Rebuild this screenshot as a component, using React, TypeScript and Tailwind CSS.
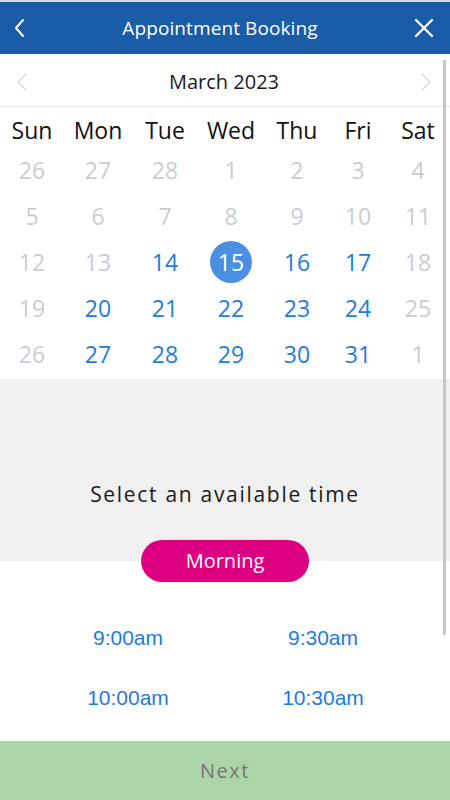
import React from "react";

/* ── Calendar data ───────────────────────────────── */
const WEEKDAYS = ["Sun", "Mon", "Tue", "Wed", "Thu", "Fri", "Sat"];

type Day = { n: number; on: boolean };

const d = (n: number, on = false): Day => ({ n, on });

const WEEKS: Day[][] = [
  [d(26), d(27), d(28), d(1), d(2), d(3), d(4)],
  [d(5), d(6), d(7), d(8), d(9), d(10), d(11)],
  [d(12), d(13), d(14, true), d(15, true), d(16, true), d(17, true), d(18)],
  [d(19), d(20, true), d(21, true), d(22, true), d(23, true), d(24, true), d(25)],
  [d(26), d(27, true), d(28, true), d(29, true), d(30, true), d(31, true), d(1)],
];

const SELECTED = 15;

const TIMES = ["9:00am", "9:30am", "10:00am", "10:30am"];

const COLS = "grid grid-cols-[64px_68px_66px_66px_66px_56px_64px]";

export default function App() {
  return (
    <div
      className="relative h-[800px] w-[450px] flex flex-col bg-white overflow-hidden"
      style={{ fontFamily: '"Open Sans", "Noto Sans", sans-serif' }}
    >
      {/* Header */}
      <div className="h-[2px] bg-[#d6d6d6]" />
      <header className="h-[52px] bg-[#1b5ca8] flex items-center justify-between px-[12px] text-white">
        <svg width="14" height="22" viewBox="0 0 14 22" fill="none">
          <path d="M11 3 L4 11 L11 19" stroke="white" strokeWidth="2" strokeLinecap="round" strokeLinejoin="round" />
        </svg>
        <h1 className="text-[19px] leading-none tracking-[0.1px]">Appointment Booking</h1>
        <svg width="20" height="20" viewBox="0 0 20 20" fill="none" className="mr-[4px]">
          <path d="M2 2 L18 18 M18 2 L2 18" stroke="white" strokeWidth="2.4" strokeLinecap="round" />
        </svg>
      </header>

      {/* Month selector */}
      <div className="h-[53px] pt-[4px] flex items-center justify-between px-[16px] border-b border-[#e6eaf0]">
        <svg width="12" height="20" viewBox="0 0 12 20" fill="none">
          <path d="M10 2 L2 10 L10 18" stroke="#d5d8dc" strokeWidth="1.3" />
        </svg>
        <span className="text-[20px] text-[#1a1a1a] leading-none">March 2023</span>
        <svg width="12" height="20" viewBox="0 0 12 20" fill="none" className="mr-[2px]">
          <path d="M2 2 L10 10 L2 18" stroke="#d5d8dc" strokeWidth="1.3" />
        </svg>
      </div>

      {/* Weekdays */}
      <div className={`${COLS} h-[40px] items-end`}>
        {WEEKDAYS.map((w) => (
          <span key={w} className="text-center text-[23px] leading-[34px] text-[#111]">
            {w}
          </span>
        ))}
      </div>

      {/* Dates */}
      <div className="pb-[2px]">
        {WEEKS.map((week, i) => (
          <div key={i} className={`${COLS} h-[46px] items-center`}>
            {week.map((day, j) => {
              const sel = day.on && day.n === SELECTED;
              return (
                <div key={j} className="flex justify-center">
                  {sel ? (
                    <span className="w-[42px] h-[42px] rounded-full bg-[#4a8fe2] text-white text-[23px] flex items-center justify-center">
                      {day.n}
                    </span>
                  ) : (
                    <span
                      className={`text-[23px] leading-[42px] ${day.on ? "text-[#1f7be0]" : "text-[#c9cdd2]"}`}
                    >
                      {day.n}
                    </span>
                  )}
                </div>
              );
            })}
          </div>
        ))}
      </div>

      {/* Time selection heading */}
      <div className="bg-[#f0f0f0] pt-[101px] flex flex-col items-center">
        <p className="text-[21px] leading-[28px] tracking-[1.7px] text-[#1a1a1a]">
          Select an available time
        </p>
        <button
          type="button"
          className="relative z-10 mt-[32px] -mb-[21px] w-[168px] h-[42px] rounded-full bg-[#dc0080] text-white text-[20px]"
        >
          Morning
        </button>
      </div>

      {/* Time slots */}
      <div className="flex-1 pt-[47px] grid grid-cols-[256px_134px] content-start">
        {TIMES.map((t) => (
          <button
            key={t}
            type="button"
            className="h-[60px] text-[21px] text-[#1f7be0] text-center"
            style={{ fontFamily: '"Liberation Sans", Arial, sans-serif' }}
          >
            {t}
          </button>
        ))}
      </div>

      {/* Next */}
      <button
        type="button"
        className="h-[59px] bg-[#abd4a8] text-[#777] text-[20px] tracking-[1.5px]"
      >
        Next
      </button>

      {/* Scrollbar overlay */}
      <div className="absolute left-[443px] top-[60px] w-[3px] h-[575px] bg-[#c6c6c6]" />
    </div>
  );
}
